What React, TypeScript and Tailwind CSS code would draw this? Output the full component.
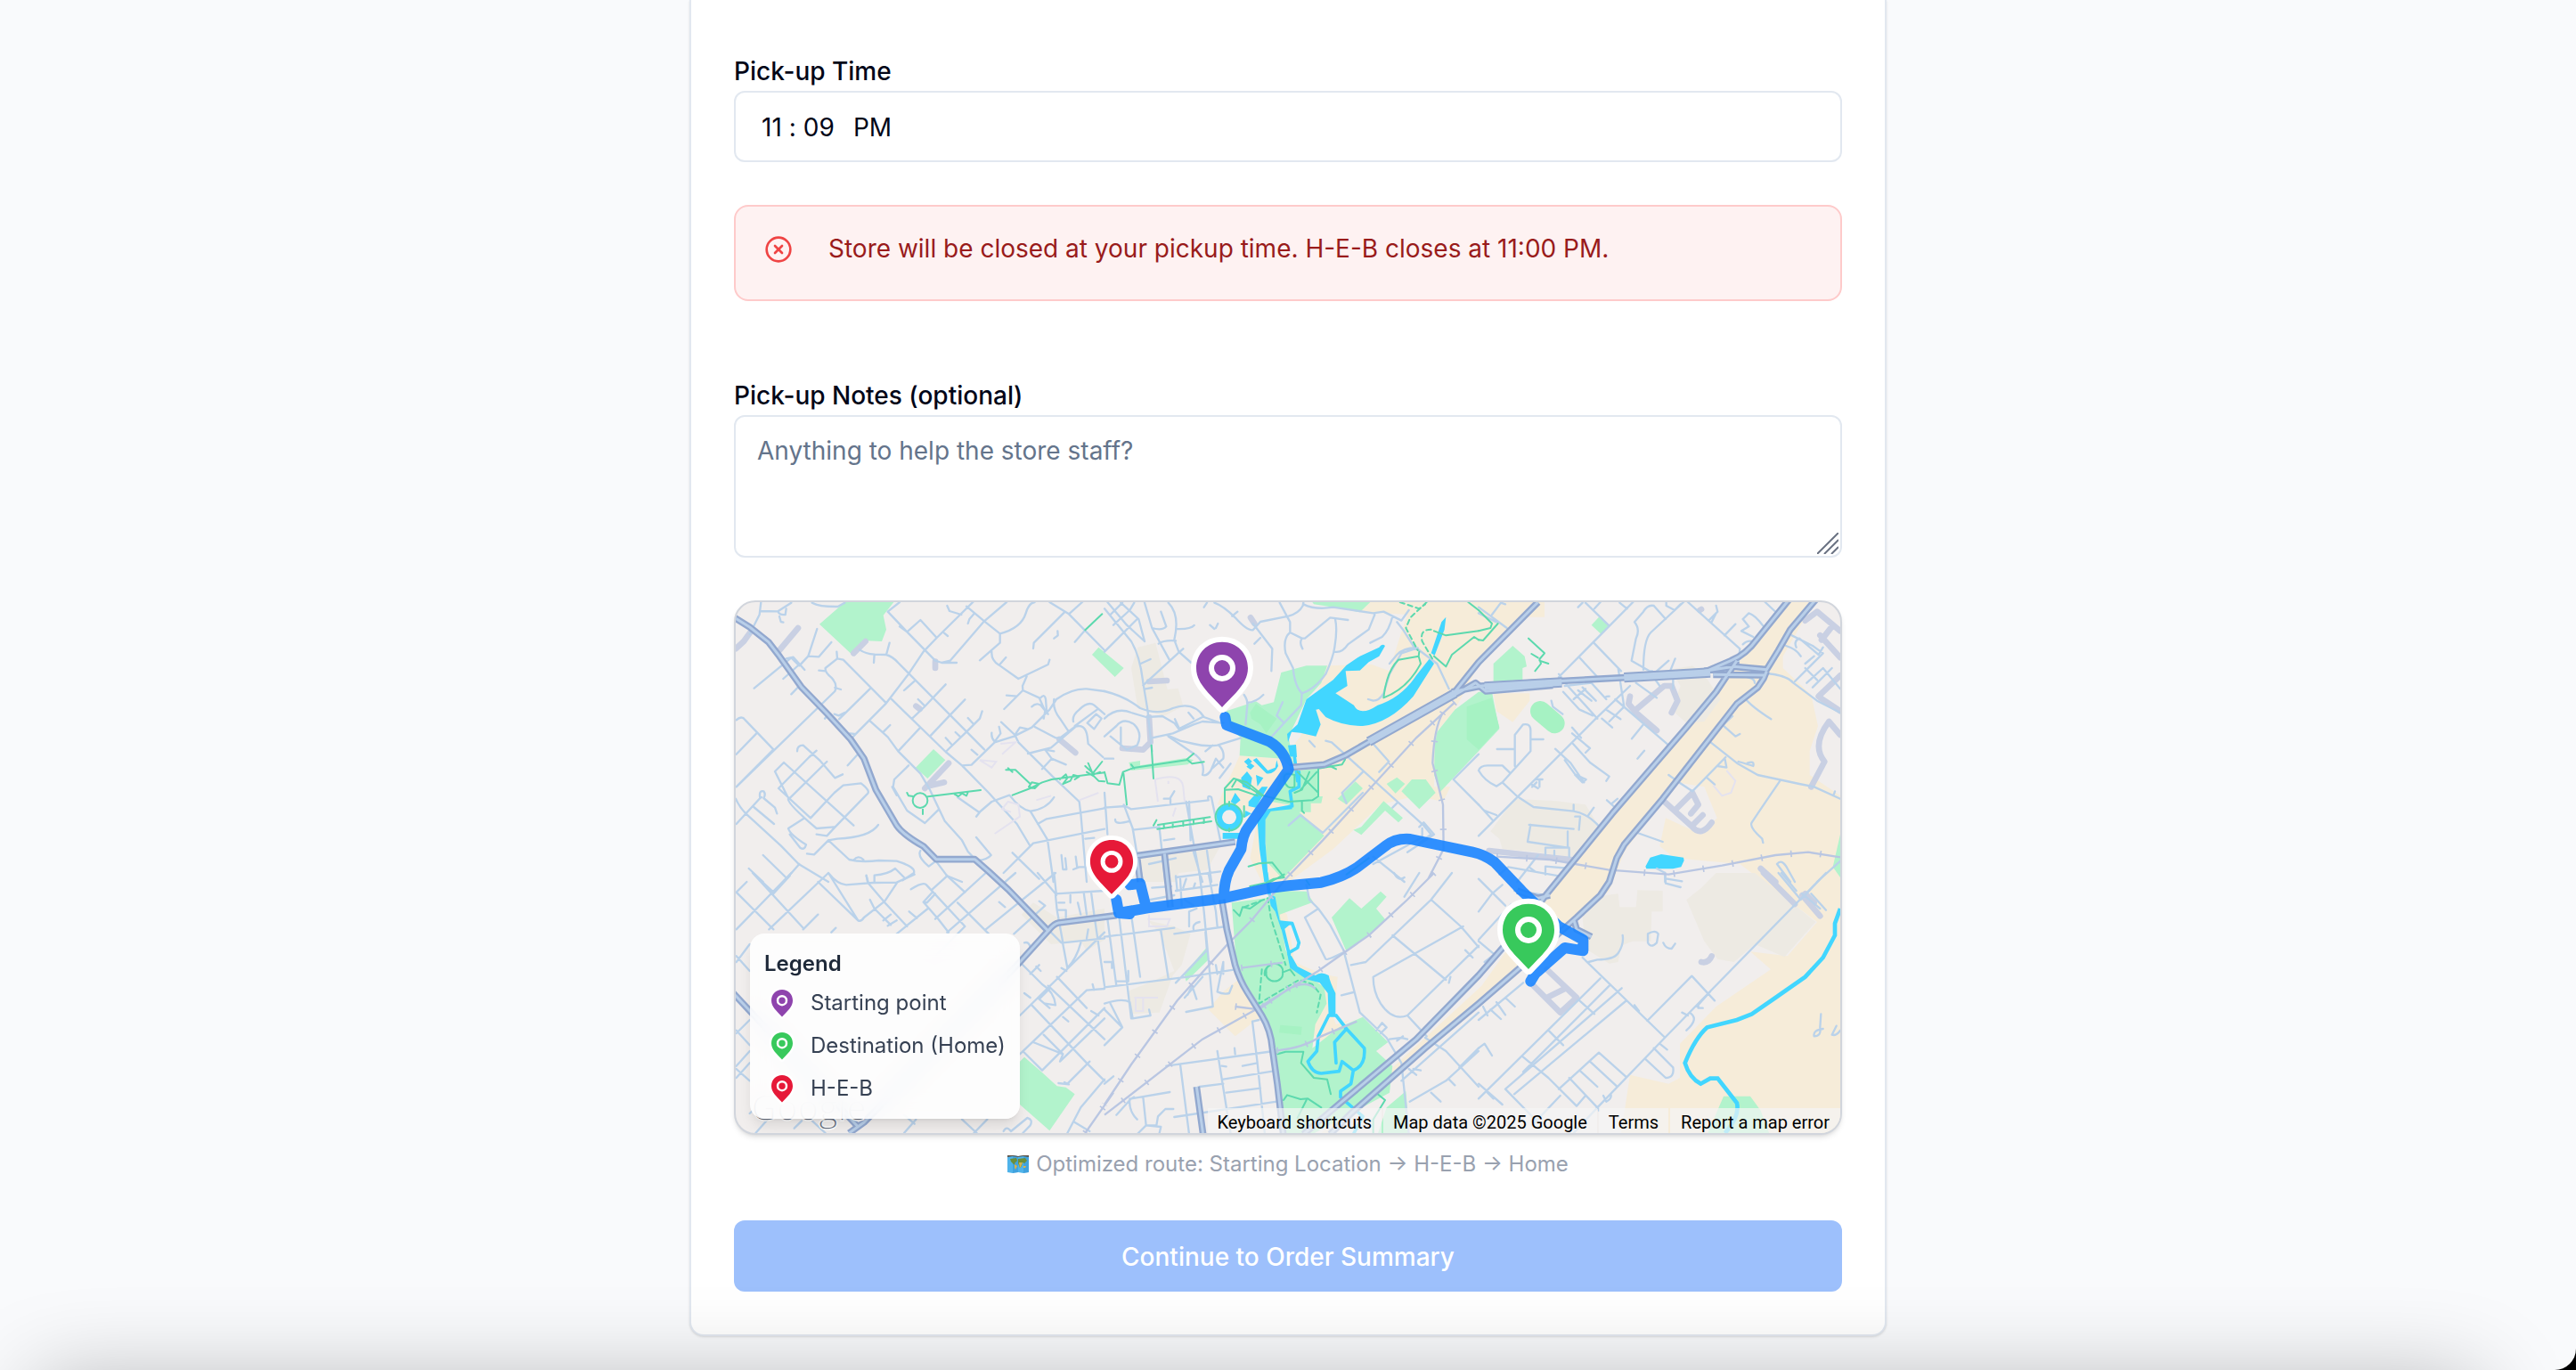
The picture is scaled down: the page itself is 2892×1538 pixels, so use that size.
import { useState } from "react";
import { CircleX } from "lucide-react";

// The map is drawn in six tiles that share one canvas. Every tile is 1260 units
// wide; the lower row starts 930 units down.
type Tile = { x: number; y: number; d: string };

const PATCHES: Tile[] = [
  {
    x: 1260,
    y: 0,
    d: "M112 170L172 155L212 312L248 308L265 368L200 402L112 375L90 240ZM110 880L390 840L345 920L250 930L240 960H110Z",
  },
  {
    x: 2520,
    y: 0,
    d: "M645 245L720 232L760 262L815 345L760 420L700 425L650 380L680 300ZM40 790L120 680L262 688L360 700L410 780L330 880L180 858L80 850L70 815Z",
  },
  { x: 0, y: 930, d: "M980 140L1020 100L1100 150L1260 120V225L1200 262L1180 230L1080 240Z" },
  {
    x: 1260,
    y: 930,
    d: "M145 160L235 180L290 205L260 310L230 345L185 470L90 475L75 400L160 365L235 330L185 200Z",
  },
  {
    x: 2520,
    y: 930,
    d: "M350 150L385 80L470 70L475 115H530L535 58L620 60V130H583L580 230H518L480 245L470 300L440 305L360 255ZM700 90L750 50L800 0H930L1135 165L1030 283L930 240L860 300L805 290L760 230Z",
  },
];

const PARKS: Tile[] = [
  {
    x: 0,
    y: 0,
    d: "M300 92L385 18H550L515 62L525 110L510 150L460 148L410 195ZM624 575L684 513L724 550L664 612ZM1218 195L1240 170L1325 240L1295 270Z",
  },
  {
    x: 1260,
    y: 0,
    d: "M700 18H895L860 52L800 40L705 25ZM595 255L680 232H750L730 290L680 345L620 470L640 590L600 545L455 535L458 475L425 440L410 385L470 365L510 352L530 365L570 355ZM600 590L720 578V672H735L730 695H695V725H650L620 700L560 690ZM540 720L640 710L740 805L600 950L545 890ZM1112 500L1120 455L1180 380L1260 320H1305L1320 400L1330 445L1260 520L1130 658L1110 600ZM785 680L845 622L870 645L815 700ZM950 630L985 608L1012 630L980 662ZM1000 655L1035 615H1082L1115 660L1060 715ZM838 785L865 775L940 688L1005 745L990 760L945 720L865 802ZM82 558L120 552V568L275 543L300 550L280 565L90 585Z",
  },
  {
    x: 2520,
    y: 0,
    d: "M50 225L115 165L155 200L162 235L148 240V280L50 285ZM380 95L405 68L437 98L412 125ZM1218 800L1193 910L1218 945Z",
  },
  { x: 0, y: 930, d: "M975 635L990 620L1050 672L1100 718L1130 722L1160 745L1075 868L975 780Z" },
  {
    x: 1260,
    y: 930,
    d: "M428 100L545 85L580 60L680 62L703 98L590 140L610 260L650 325L740 385L748 440L710 510L700 590L790 520L870 485L955 570L915 600L970 650L960 740L700 880H603L580 650L540 480L445 320ZM765 150L825 85L865 120L930 62L950 80L915 120L948 160L815 265ZM268 340L345 250L352 290L275 365ZM950 790L1015 735L1027 880H920Z",
  },
  { x: 2520, y: 930, d: "M825 752H915L950 800L980 880H770Z" },
];

const STREETS: Tile[] = [
  {
    x: 0,
    y: 0,
    d: "M103 18L98 60L65 125M100 48L160 49L205 20M160 49Q165 62 185 60L188 40M165 66L170 84L178 86M275 20Q300 34 362 33L385 20M80 308L205 205L232 232L262 200L292 108M188 208L212 203L250 246M262 200L298 202L340 153M178 276L232 228M205 328L232 300M358 185L360 208L320 240Q318 255 340 272Q362 295 352 318L20 640M298 248L320 250M352 306L372 312M360 208L380 212L525 358M435 178Q455 192 485 194L525 195Q545 200 565 222L855 514M485 194L483 222M525 195L536 155M366 412L472 308M412 472L525 358L600 260L650 185L695 138L855 -20M542 344L725 522L780 568L870 660L965 765L1010 840M470 418L530 472L565 520L640 440M565 520L640 595L672 650L722 755L780 820L800 858L830 890M516 454L538 432M585 315L620 284M612 410L652 372L725 295M672 470L738 400L790 346M725 522L795 455L840 410L848 385M780 568L812 566L890 490L955 470L1015 440L1075 380L1098 345Q1150 308 1200 310L1260 318M632 345L655 368M725 475L745 497M758 456L775 472M800 408L820 430M812 515L832 532M570 100L595 118L640 78L695 138M530 50L570 18M530 50L595 118L690 215L712 222L762 222M712 222L740 215L855 82L930 18M720 122L732 132M730 30L738 48L778 60M800 90L805 75L820 58M795 32L855 82L908 124Q980 105 995 55Q1005 20 1025 18M908 124L908 155L840 214M880 185Q878 215 905 230L970 276L1070 228L1075 212M905 230L928 204M998 268L984 300L985 315L922 378M930 332L965 335M985 315L1040 340L1060 385L1055 410M1015 370Q1030 355 1045 365L1070 395M1045 340Q1058 325 1062 345L1065 385M1075 18L1140 58L1185 18M1140 58L1260 180M1125 52L1022 155L1020 174M1160 152L1195 112M1102 115L1103 130L1090 140M1090 345Q1085 380 1110 410L1140 455M1025 438L1095 475L1110 475L1160 438Q1195 425 1202 470L1205 495L1255 540M1002 528L1080 508L1160 440M912 422L958 465L970 490L1085 605L1175 690L1180 730L1200 960M955 470L975 440L1000 445M1050 580L1082 545L1060 515L1090 520M1082 545L1130 565M1155 420Q1150 400 1175 380Q1205 350 1225 365L1260 395M1202 425L1232 395L1250 410L1225 445ZM1160 435L1235 380M880 458Q878 475 890 488M890 488L910 460L905 438M20 530L90 458M20 415Q38 398 50 415L145 514L20 640M20 765L100 678Q95 650 112 655Q120 665 112 678L150 710L157 730M100 678L105 675M75 705L147 765M18 680Q30 708 52 730L170 838L230 900L330 960M150 588L180 558L415 770M162 645L270 745M195 680Q190 695 290 780L350 775M150 588L192 672M162 645L265 540L290 518M195 683L325 555M225 520Q225 500 245 500L300 550L352 610L378 598M270 745L350 660L380 635L440 628Q475 655 460 665L350 778L325 805L290 800M250 745L195 780Q200 800 255 835Q250 855 235 845L200 800M330 820L360 815Q470 810 498 768M330 820L282 868L258 865M330 820L400 885Q440 895 500 888L560 890Q625 910 618 930L580 955M415 887Q430 868 448 885M110 870L190 948L232 900M62 915L110 960M485 960V938Q530 935 555 915L585 945M458 938L462 960M600 568L552 615L548 640L595 720L655 762L702 716M545 640L560 668M640 855Q628 875 668 908L692 890M692 890L730 940L780 960M828 810L878 870Q865 885 835 888M765 675L838 726L880 690L940 668Q975 715 1010 722Q1065 715 1090 675M828 740L840 725M1010 722L1068 818L1088 960M1035 765L1065 748L1260 712M920 930L1020 830L1260 782M950 862L1040 950M1115 870L1120 918H1132L1128 880M1163 875L1168 912M1155 918L1175 910H1220M1195 815L1225 812M395 568L440 518M350 395L365 400L385 390M318 410L330 395M402 460L418 462",
  },
  {
    x: 1260,
    y: 0,
    d: "M0 40L90 150Q120 200 130 290L145 380L160 520M0 185L110 75M10 18L75 95L135 150M20 60L60 20M55 20L115 75L135 150M30 95L85 45L100 20M135 20L160 105L220 215M160 105Q195 115 208 100L190 50M215 20Q255 60 235 145L250 185L292 222M242 108Q290 110 302 96M182 158Q200 145 240 148M130 298L250 188L265 175M122 225L155 210M138 310L160 306M335 35L345 20M370 20Q400 30 440 70Q480 115 500 112L525 84L620 65Q655 55 668 30L670 18M430 65L448 50M500 90L565 175L562 250M505 158L525 138M355 95L370 108M375 105L382 90M590 20L625 85V120L665 140H675L760 70L820 78M665 140Q655 155 667 175M625 120Q600 140 610 190L635 240Q640 300 665 325M777 75Q785 110 775 170Q770 205 745 260Q710 310 665 325L662 365L605 425L555 480M600 355L580 400L605 425M775 185Q800 190 820 160L890 110L910 60M670 25Q710 45 770 35L905 55L940 50L1000 80L1025 45M895 155L935 135Q960 110 970 65M985 85L1005 110L1040 165L1120 225L1160 310M960 225L985 195Q1010 170 1055 172M1055 172L1000 190L960 260L940 325Q925 350 905 350L888 345M470 330Q485 350 480 375L475 430M480 357Q510 355 535 330M0 318Q70 335 120 375Q180 400 230 375Q300 350 335 405L390 425M0 410Q40 370 90 390L140 405L195 402L235 425L250 445L330 405M237 412L250 440M283 390L300 410M160 475L230 460L300 430L330 420L400 425M210 465L255 485L300 495Q340 505 380 500L460 475M215 470L310 535Q340 560 330 600Q345 605 358 585L375 545L400 575M340 520L365 500M388 610L425 562M385 500Q405 520 400 545L360 580M0 470L40 435Q65 405 100 430Q130 460 110 500L75 515L20 470M55 440V500M0 545H30M0 710L70 705L90 715L350 685Q345 665 360 675L390 820M65 700L95 780L110 870M95 785L185 775M36 750Q35 770 85 755M200 680H220L235 655M222 680V695M275 690L300 830L325 960M285 690L290 820M300 860L330 960M345 855L360 960M185 780L205 960M110 870L130 960M200 820L235 815M240 945L390 925M150 900L240 880M0 660L10 800M905 495L958 555L925 590M745 485L765 490L1075 770L1100 800M870 590L800 660L815 695M1060 775L1075 760L1110 800L1020 860M970 710L985 695M1070 780V810L905 900M905 875L1010 960M1260 530L1175 615L1260 700M660 735L735 795L870 660M620 770L660 735M690 485L708 505M1100 800L1060 830",
  },
  {
    x: 2520,
    y: 0,
    d: "M0 35L95 105M45 60L75 20L90 25M335 35L350 20M360 20L440 98M390 40L410 18M475 20L500 40M520 18L270 270M388 155L480 250M340 205L400 270M590 30Q570 25 555 50L525 85Q545 110 530 140L515 215L575 250H585M690 18L580 120Q555 145 555 245M590 30L630 75M632 30L660 45L680 25M632 30V20M705 18L880 175L875 220M800 30L805 50L775 80M785 85L800 55M828 130L865 92M965 18L1010 60M890 75L910 55Q930 60 960 100M890 75L910 100L885 115L925 135M890 160Q905 145 925 150M270 260L300 300L400 410M285 320L340 380L385 400M0 805L395 410L510 300M290 300L380 290L430 345M335 315L380 350M350 305L395 350M320 345L360 310M430 345Q420 335 440 335M470 240L490 370L440 420M415 410L450 440M430 380L478 412M460 345L640 500M610 300Q590 270 575 260M600 250L640 215M645 250L662 208M655 280V310M530 290L600 340M555 430L516 478M535 545L558 518M315 440L345 475M318 495L375 558L440 605L430 620M315 460L375 510L360 525M258 512L310 560L355 625M290 550L325 598L362 615L350 625L325 600M245 350L250 370L283 395M62 513H122M175 480H218M122 570V465L150 430Q175 425 175 450V520L80 625M0 585Q5 568 30 568H80L105 592M0 585Q20 620 60 638L80 625L130 672L185 708L320 722Q370 730 410 778M175 630L200 645M192 615L215 615M180 640L195 625M205 640V615M320 720V700M370 735L388 710M432 685L460 710M468 680L450 695M20 720L60 735M0 700L50 755M170 768L320 782M175 768L165 825L300 845V790M225 870V845H305V875M255 855V870M325 740H342L338 785M70 935L100 910L270 940M225 935V908L310 915M170 910L190 925M600 915L628 930V960M535 795L620 825M640 600L668 620L720 655L832 540M775 485L870 560L940 600L1080 630L1130 640L1218 680M1015 620Q960 700 920 760Q910 775 955 815L958 828M875 555Q910 565 925 570Q930 550 905 560M770 610L795 632M805 570L835 575L830 548M820 430L865 470L880 462M825 430L855 402M900 345Q920 370 985 412M970 258Q1040 265 1060 290L1140 350L1218 390M905 270Q930 275 930 290M1055 130L1125 165L1160 190L1065 285M1035 165Q1070 175 1085 200M1100 240L1140 280M1070 170Q1060 150 1080 140L1145 195L1160 170M1100 225L1130 200M1105 290L1160 240L1218 310M1125 305L1190 240M1195 670L1200 655M1140 960L1218 890M1005 900Q1020 880 1040 915L1065 960M1005 900L1050 960M0 55L60 85M130 960L200 870",
  },
  {
    x: 0,
    y: 930,
    d: "M20 190L205 0M20 65L145 190M75 0L245 185M145 70L200 10M75 0L145 65M20 65L55 30M130 190L330 0L430 160Q440 165 450 150L520 95L560 35M295 30L430 160M330 0Q360 38 390 40L480 33L560 32L620 5M458 10L465 35L520 100L595 180M295 140L245 190M355 185L340 200M470 90L485 120L540 175M515 160L540 140M530 178L560 160M602 130L628 152M560 205L665 120M608 55Q650 28 660 40L790 180M680 65L650 98L700 155L735 200M650 98L662 100L690 70M680 55L730 10M728 8L790 65M790 180L660 310M690 155L860 0M765 100L870 205M730 200L960 0M860 190L1095 0M905 98L925 115M1035 0L1095 70L1260 60M1040 95L1060 110M955 205L1060 110M1095 75L1100 125L1120 235M1100 125H1130V150M1145 75V100M1105 100H1125M1170 100L1180 140M1190 65L1200 140M1215 65L1225 140L1260 380M1120 235L1260 220M1090 0L1098 75M1205 190L1200 220M1180 235Q1165 290 1135 320L1120 240M990 235Q1005 230 1010 250M975 300L1050 375Q1090 400 1095 445L1060 440M1060 180L1115 235M975 480L1260 200M1010 340L1040 310M1045 330L1030 315M1115 320L1132 330M1070 380L1260 560M1100 350L1200 455M1015 445L1200 640L1260 700M975 610L1200 395L1260 390M1020 570L1120 610M1055 545L1120 610L1110 635L1260 490M985 600L1050 665L1260 455M1125 705L1135 710L1210 635M1105 708L1140 712M1220 375L1225 395M1215 465L1240 480M990 405L1010 420M1075 390L1040 425L1075 455M1120 485L1138 500M1135 876L1180 790L1260 695M1160 840L1210 870M20 300L65 240M20 280L65 330M20 540L65 495M20 530L65 580M20 650L65 600M20 690L65 640M20 660L65 700M85 876L130 825M65 810L85 790M215 860L240 835M270 830L320 876M585 815L620 845M585 876L625 830M780 830L830 876M820 876L865 830M920 870Q930 850 945 870L1000 825Q1020 830 1010 850L985 876",
  },
  {
    x: 1260,
    y: 930,
    d: "M155 90L235 75M160 50L225 45M240 60L380 40M255 20L260 110M240 10L245 60M265 50L275 20M300 50L305 35M320 0L335 130L365 450L275 468M350 0L375 130L380 180M0 215L235 185M235 205L410 180M10 155L40 380M50 155L90 490M92 155L120 350M190 195L215 355M0 385L280 350L440 325M285 180V130L310 120M270 90L300 110M330 110L375 105M300 190Q295 170 320 165M340 200L345 260L240 370M0 300H25V320M40 365H80V330M0 440Q60 420 85 435L95 490L155 480L150 460M20 440L60 520L0 580M0 460L60 520M280 410L295 380L310 425M270 420L330 350M375 310L380 340M400 300L380 400Q400 410 420 405L430 380M400 300V340M208 650L570 600M255 645L285 880M380 600L425 880M438 590L440 610M498 500L515 640L540 880M500 500L520 495M395 650L410 652M465 650L515 640M400 695L565 668M410 740L525 725M235 822L580 770M320 720L400 710M40 815L90 760L220 738M85 760Q80 800 110 830M90 760L100 755M130 755L140 850H175L180 820L205 795H232M110 880L140 850L190 855L185 876M0 710L30 685M680 40L690 90L720 120L760 175L805 260L860 470M720 120L675 150L745 290Q750 295 810 265M860 470L950 555L1000 640L1025 880M798 412L838 402M975 0Q990 30 1010 15M830 310L880 300L1100 90L1170 0M1100 90L1200 180L1260 250M970 210L1150 360M1208 180L905 350Q905 400 930 440Q970 500 1020 480L1260 245M1020 480L1085 550M915 530L935 505L950 520L930 540M960 560L1000 555L1020 560M985 565L1005 550M1080 555L1150 600L1260 720M1000 700L1260 470M1195 655L1260 590M1028 770L1150 700L1260 600M1040 660L1065 665M1025 660L1050 680M1100 740L1132 770M1160 695L1180 715M1160 370L1165 350M1215 260L1240 285M1060 0L1010 80",
  },
  {
    x: 2520,
    y: 930,
    d: "M0 20L90 110M45 70L80 40M0 225L110 105M0 230L60 280M0 130L45 70M20 300L45 280M120 60L225 75M350 285L625 552M370 300L400 292Q455 292 470 270Q490 240 485 210M568 498L718 347L795 430M1170 0L630 552L400 790L320 876M570 205Q595 190 605 205L600 235Q580 255 570 235ZM622 235Q630 255 650 255L662 238M628 0L630 35L680 48M635 20L685 28M525 445L540 465M780 400L735 450M740 440V455L755 455M685 470L705 480M710 470Q745 490 700 530M610 575L635 595M590 590L655 655Q660 690 630 690L560 625M235 530L285 580M340 430L390 475M410 355L0 760M440 380L150 670M482 388L90 728M495 432L120 745M150 620L235 690M235 690L330 785L360 750M270 728L405 605L495 685M340 665L400 720M375 635L465 718M305 690L400 790M90 728L200 840M30 740L50 760M0 710L80 780M0 495L150 370M90 420L122 450M60 435L90 478M40 460L75 492M15 450L30 480M0 590L20 575L45 615M275 750L180 850M430 770Q450 760 445 745M420 750L430 770M405 795V800M1010 0L1085 90L1170 0M1020 0L1070 60M1090 70L1150 120M1120 70L1170 125M1153 475L1150 520Q1155 550 1130 550Q1125 530 1160 525M1205 515L1190 545Q1205 550 1218 530",
  },
];

// Wide pale strokes around the service roads.
const HALOS: Tile[] = [
  { x: 0, y: 0, d: "M18 175L45 150L68 118M165 180L228 105M690 218V240M625 368L638 378M415 190L455 150M655 645L735 560M675 635L720 625M1108 480L1162 525" },
  { x: 1260, y: 0, d: "M492 70L505 90M150 285L210 282M150 405L155 490L130 515L60 510" },
  { x: 2520, y: 0, d: "M745 45L750 42M510 335L505 360L530 390L600 450M530 380L625 300L650 300L670 350L650 390M1100 80L1140 50L1218 115M1155 145L1190 100M1150 130L1218 205M1145 335L1218 265M1150 340L1218 385M1218 465L1180 420Q1120 500 1165 555L1120 640M620 685L720 775Q750 810 785 760M720 770L755 735M660 720L720 660L740 700L715 730M35 855L310 885M950 915L1000 960" },
  { x: 2520, y: 930, d: "M185 380L275 470L330 420L230 325M230 420L290 390M750 300Q775 305 785 280M960 0L1065 105M1090 75L1150 145M1100 70L1130 100" },
];

const TRAILS: Tile[] = [
  {
    x: 0,
    y: 0,
    d: "M595 660L600 670L615 672M614 686a25 25 0 1 0 50 0a25 25 0 1 0 -50 0M648 710V732M665 673L843 651M755 665L768 672L780 662L795 670L800 658M950 668L1010 645L1050 625L1082 615L1260 592M928 583H960L1010 630M935 577L950 590M1005 640L1015 625L1040 630L1025 645ZM1110 615L1130 598L1135 610L1120 630L1145 620L1155 600L1175 605L1160 615M1200 590L1225 605L1240 620L1260 622M1205 560L1220 595L1252 555M1195 570L1225 598L1245 590M1195 112L1252 58",
  },
  {
    x: 1260,
    y: 0,
    d: "M0 590L10 628L50 633L62 590L98 576L275 550L300 528M280 550L295 562L335 556M90 565L100 578M158 500L165 612M64 595L75 700M405 700V645L435 612L480 625L535 670L620 690L700 685L720 672V580M405 650L450 648L515 670M430 640L445 615L530 670M374 742a45 45 0 1 0 90 0a45 45 0 1 0 -90 0M420 690V705M420 780V790M470 740V705M180 768L355 742M178 782L360 756M165 770L175 752M200 768V780M230 762V776M265 758V772M300 752V766M335 748V762M605 605Q610 590 640 600V640Q615 650 605 620ZM650 590L720 660M660 650L715 590M640 660L665 650L690 590M720 578L800 565L810 548M760 570L780 580M665 690V720L672 728M485 908L520 898L565 895L605 945L570 950L550 960M1110 115L1150 130L1260 115M1110 200L1150 235L1170 195L1245 135L1260 145M990 212L1058 200L1060 185M1058 200L1065 225Q1020 310 940 340Q950 250 990 212M1225 18L1260 45M815 935L890 880",
  },
  { x: 2520, y: 0, d: "M0 45L45 90L40 105L0 115M0 145L15 147L65 90M168 140L222 190L205 210L210 225L190 250M178 192L200 205M205 215L235 225" },
  {
    x: 1260,
    y: 930,
    d: "M435 125L455 145L465 115L490 120L525 95M490 45L560 30L605 5M545 335a28 25 0 1 0 55 0a28 25 0 1 0 -55 0M600 335L625 325L640 345M540 345Q535 320 560 310M583 610L610 602H670L662 640L705 690L750 695L762 745M603 765L615 748L660 762L685 760L730 790M680 765L650 825M905 876V830L945 765L920 745M690 40L680 25",
  },
];

const TRAILS_DASHED: Tile[] = [
  { x: 1260, y: 0, d: "M1085 18L1030 70L1015 105L1055 180M1100 110Q1060 110 1070 150L1105 210M995 18L1060 40L1080 25" },
  { x: 1260, y: 930, d: "M470 115L550 85L560 150L610 310M530 325L520 440L655 360L700 375L728 410L715 470" },
];

const WATER: Tile[] = [
  {
    x: 1260,
    y: 0,
    d: "M945 165Q935 155 925 170L860 200L815 230L770 280L680 345L650 430L615 462L618 490L630 455L660 458L712 470L728 430L712 380L722 378L745 405Q800 435 870 435Q960 425 1040 335L1110 225L1095 208L1050 265Q1000 340 920 365Q860 405 840 365L778 325L818 300L812 250L860 248L890 220L925 200ZM1100 190L1135 85L1150 68L1145 110L1112 197ZM618 500L645 498L648 540L625 538ZM460 610L480 588L497 610L490 650L465 640ZM510 600L535 610L515 638ZM425 690L440 660L458 685L440 700ZM485 690L530 640L550 640L510 710L485 705ZM470 555L485 543L497 555L483 568ZM478 572L492 560L505 570L492 582ZM500 550L512 543L550 585L575 575L580 550L585 570Q570 600 545 595ZM398 795H455V815H398ZM515 755L550 715L630 700L632 715L560 722L542 750V830L552 960H538L522 850ZM475 720L495 730L470 745Z",
  },
  { x: 2520, y: 0, d: "M562 908L578 878L615 867L690 878L692 888L682 910L655 916H565Z" },
  { x: 1260, y: 930, d: "M552 70L575 80L582 120L590 160L635 165L605 190L595 190L575 130L560 110ZM615 270L630 280L650 315L710 345Q730 330 755 345Q760 370 778 405L778 485H755L752 405L725 370L680 358L625 320Z" },
];

const WATER_LINES: Tile[] = [
  { x: 1260, y: 0, d: "M640 540L650 620M655 590V640L625 655L632 705" },
  {
    x: 1260,
    y: 930,
    d: "M545 0L555 70M598 175L622 275M605 170H632L655 235L650 252L622 268M755 480L720 550L715 600L685 635Q700 675 730 675L790 668L800 635L838 665L830 710L795 735L795 755L870 820L840 876M780 480L815 525L775 570L780 640M815 525L875 590Q880 650 838 665",
  },
];

const RAILS =
  "M2440 355L2310 475L1995 820L1870 950L1755 1090L1670 1175L1505 1360L1350 1575L1260 1710M2400 390Q2370 440 2365 560L2400 700L2402 850L2350 950M2370 930L2280 1020L2150 1140L1980 1260L1770 1390L1590 1490L1260 1745M2760 1140M2580 875L2760 885L2960 920L3160 935L3340 905L3520 870L3630 860L3738 877M1700 1380L1780 1390L1880 1320Q1940 1290 1970 1320M1720 1250L1860 1232M1840 1528Q1930 1520 1990 1480L2110 1430M1195 1806L1290 1670";

const HIGHWAYS =
  "M10 68L65 102L128 152L165 200L240 305L330 398L405 480L450 545L490 650L560 770Q580 800 650 840L693 884H823L870 925L935 985L1070 1125M400 1806L450 1770L975 1230L1070 1125Q1090 1100 1105 1098L1300 1073M10 1335L430 1785M1370 872L1700 825M1462 865L1482 1045M1370 880L1380 960M1655 1020L1672 1120L1700 1240Q1715 1290 1740 1330L1790 1410Q1820 1460 1825 1520L1842 1640L1862 1810M1570 1650L1592 1810M1885 575L2000 565L2070 535L2165 480L2440 320L2520 220L2720 18M2440 330L2510 290L2545 318L2770 298M2430 320L2530 300L2770 285L3010 272L3270 258L3370 215Q3420 195 3460 140L3565 10M3280 250L3380 235L3490 245L3530 180L3570 110L3655 10M3310 262L3485 264M3490 250L3480 275L3460 305L3390 360L3140 680L3010 835L2985 880L2960 960L2930 1005L2850 1080L2670 1240L2520 1370L2340 1520L2090 1740L2020 1810M3390 215L3320 320L3220 440L2970 730L2840 890L2750 1000L2690 1080L2520 1275L2310 1490L2060 1700L1930 1810M2840 1085L2850 1120L2900 1145M2650 990L2720 1015L2760 1005";

const INTERCHANGES = "M2150 488L2440 325M2540 303L2800 288M3010 272L3300 255";

const ROUTE =
  "M1666 405L1671 432L1815 487Q1870 520 1880 582L1745 775Q1725 800 1720 850L1680 920Q1662 960 1662 1012M1300 1020L1308 1065L1405 1048L1660 1015L1820 980L1880 973L1990 962Q2060 945 2110 912L2205 840Q2240 812 2290 816L2500 860Q2540 868 2575 895L2665 990L2790 1110L2872 1155V1192L2810 1182L2710 1270L2695 1295M1345 970L1380 965L1400 1045M1308 1065L1345 1068";

function Tiles({ tiles, className, width }: { tiles: Tile[]; className: string; width?: number }) {
  return (
    <g className={className} strokeWidth={width} strokeLinecap="round" strokeLinejoin="round">
      {tiles.map((t) => (
        <path key={`${t.x}-${t.y}`} d={t.d} transform={`translate(${t.x} ${t.y})`} />
      ))}
    </g>
  );
}

function PinShape({ className, outline }: { className: string; outline: number }) {
  return (
    <g strokeLinejoin="round">
      <path
        className={`${className} stroke-white [paint-order:stroke]`}
        strokeWidth={outline}
        d="M0-88C-50-88-87-50-87 0C-87 52-42 86 0 132C42 86 87 52 87 0C87-50 50-88 0-88Z"
      />
      <circle r="36" className="fill-none stroke-white" strokeWidth="18" />
    </g>
  );
}

function LegendRow({ label, className }: { label: string; className: string }) {
  return (
    <li className="flex h-10 items-center gap-3">
      <svg viewBox="-50 -62 100 100" className="size-10 shrink-0" aria-hidden="true">
        <g transform="translate(0 -19) scale(0.345)">
          <PinShape className={className} outline={36} />
        </g>
      </svg>
      <span>{label}</span>
    </li>
  );
}

function RouteMap() {
  return (
    <div className="relative h-[600px] overflow-hidden rounded-3xl border-2 border-gray-300 bg-[#f1eeed] shadow-md">
      <svg
        viewBox="18 18 3720 1788"
        preserveAspectRatio="xMidYMid slice"
        className="block h-full w-full"
        role="img"
        aria-label="Route map"
      >
        <g className="fill-[#f6ecd9]">
          <path d="M2155 18H2742V68H2685L2600 150L2520 230L2440 380L2375 460L2370 640H2425L2400 690L2310 670L2190 700L2030 850L1880 960H1790L1750 880L1780 730L1640 700L1715 535L1860 545L1920 470L2010 232L2160 228L2220 250L2250 150L2280 60L2120 50ZM2570 325H2692V350L2635 422L2580 385Z" />
          <path d="M1840 1040L1875 1070L1900 1230L1990 1270L2045 1280L2040 1340L2020 1390L2040 1440L2085 1425L2000 1500L1960 1480L1900 1300ZM1610 1390L1660 1330L1710 1290L1790 1410L1700 1480Z" />
          <path d="M3565 18H3650L3545 200V240L3640 330L3663 435L3635 520V600L3738 670V1806H1990L2530 1310L2750 1000L3340 280L3460 150Z" />
        </g>
        <path
          className="fill-[#f1eeed]"
          d="M3140 680L3185 625L3280 640L3323 745L3270 800L3150 745L3130 840L3180 880L3400 900L3440 930L3660 1095L3560 1210L3435 1195L3504 1255L3320 1380L3198 1505V1620L3160 1640L3030 1610L3000 1806H2030L2340 1520L2960 990L3010 860Z"
        />
        <Tiles tiles={PATCHES} className="fill-[#edeae3]" />
        <Tiles tiles={PARKS} className="fill-[#b2f3cc]" />
        <path className="fill-[#a6f2c3]" d="M1750 390L1770 360L1840 410L1805 460L1785 430L1755 410ZM2480 370L2565 340L2590 440L2520 515L2480 480ZM1852 1442L1925 1448L1922 1475L1848 1468Z" />
        <path className="fill-none stroke-[#a6f2c3]" strokeWidth="68" strokeLinecap="round" d="M2728 385L2776 426" />
        <Tiles tiles={WATER} className="fill-[#42d6ff]" />
        <circle cx="1680" cy="742" r="34" className="fill-none stroke-[#42d6ff]" strokeWidth="20" />
        <Tiles tiles={WATER_LINES} className="fill-none stroke-[#42d6ff]" width={11} />
        <path
          className="fill-none stroke-[#42d6ff]"
          strokeWidth="14"
          d="M3738 1050L3720 1100V1140L3680 1215L3620 1280L3520 1350L3440 1405L3390 1425L3290 1450Q3250 1485 3215 1570Q3230 1620 3268 1640L3300 1622H3325L3390 1705Q3400 1750 3350 1806"
        />
        <Tiles tiles={HALOS} className="fill-none stroke-[#c9d0e3]" width={20} />
        <Tiles tiles={STREETS} className="fill-none stroke-[#bad2ea]" width={7} />
        <path
          className="fill-none stroke-[#e4e2ef]"
          strokeWidth="6"
          d="M910 495L960 490L915 530M840 550L895 555L880 575ZM890 798L975 740L970 700L935 690L915 715L945 725M1030 685L1080 670M1175 685L1240 660M1430 615Q1520 590 1525 640L1530 690M1430 615L1440 690M1475 620V630M1490 740L1500 710M1405 1085H1480L1470 1110H1410V1070M1360 1350H1440M1365 1350V1395H1390V1350M3355 585L3385 620L3370 660L3340 670L3310 635"
        />
        <Tiles tiles={TRAILS} className="fill-none stroke-[#5cd9ae]" width={6} />
        <g strokeDasharray="16 12">
          <Tiles tiles={TRAILS_DASHED} className="fill-none stroke-[#5cd9ae]" width={6} />
        </g>
        <path className="fill-none stroke-[#b9c6e2]" strokeWidth="7" d={RAILS} />
        <path className="fill-none stroke-[#b9c6e2]" strokeWidth="22" strokeDasharray="5 95" d={RAILS} />
        <g className="fill-none" strokeLinejoin="round">
          <path className="stroke-[#92a8cf]" strokeWidth="23" d={HIGHWAYS} />
          <path className="stroke-[#92a8cf]" strokeWidth="34" d={INTERCHANGES} />
          <path className="stroke-[#b9cfe9]" strokeWidth="22" d={INTERCHANGES} />
          <path className="stroke-[#b9cfe9]" strokeWidth="9" d={HIGHWAYS} />
        </g>
        <path
          className="fill-none stroke-[#1a84ff]/90"
          strokeWidth="36"
          strokeLinecap="round"
          strokeLinejoin="round"
          d={ROUTE}
        />
        <g transform="translate(1656 240)">
          <PinShape className="fill-[#8e44ad]" outline={36} />
        </g>
        <g transform="translate(1284 892) scale(0.83)">
          <PinShape className="fill-[#e61938]" outline={36} />
        </g>
        <g transform="translate(2688 1122)">
          <PinShape className="fill-[#38c95c]" outline={36} />
        </g>
        <text
          x="70"
          y="1764"
          className="fill-gray-500 stroke-white font-['Open_Sans',sans-serif] text-[118px]"
          strokeWidth="4"
        >
          Google
        </text>
      </svg>

      <div className="absolute bottom-4 left-4 rounded-2xl bg-white/85 px-4 pt-[18px] pb-[14px] text-2xl text-gray-700 shadow-lg backdrop-blur-md">
        <h3 className="mb-2 leading-8 font-semibold text-gray-800">Legend</h3>
        <ul className="flex flex-col gap-2">
          <LegendRow label="Starting point" className="fill-[#8e44ad]" />
          <LegendRow label="Destination (Home)" className="fill-[#38c95c]" />
          <LegendRow label="H-E-B" className="fill-[#e61938]" />
        </ul>
      </div>

      <div className="absolute right-0 bottom-0 flex h-7 gap-0.5 font-[Roboto,sans-serif] text-xl leading-8 whitespace-nowrap text-black">
        <button type="button" className="bg-[#f5f5f5]/70 px-[11px]">
          Keyboard shortcuts
        </button>
        <span className="bg-[#f5f5f5]/70 px-[11px]">Map data ©2025 Google</span>
        <a href="#terms" className="bg-[#f5f5f5]/70 px-[11px]">
          Terms
        </a>
        <a href="#report" className="bg-[#f5f5f5]/70 px-3">
          Report a map error
        </a>
      </div>
    </div>
  );
}

function WorldMapIcon() {
  return (
    <svg viewBox="0 0 24 20" className="h-5 w-6" aria-hidden="true">
      <path className="fill-[#4fb3ea]" d="M0 1L6 0L12 1L18 0L24 1V19L18 20L12 19L6 20L0 19Z" />
      <path className="fill-[#2f8fd0]" d="M6 0L12 1V19L6 20ZM18 0L24 1V19L18 20Z" opacity="0.45" />
      <path className="fill-[#6c8f3a]" d="M3 4L10 3L11 6L8 9L9 11L7 10L4 7ZM12 4L20 3L22 6L19 9L17 8L16 12L14 14L12 9Z" />
      <path className="fill-[#d9b44a]" d="M8 10L11 12L9 16L8 14ZM13 8L17 8L15 13L14 14ZM18 12L21 12L20 14L18 14Z" />
      <path className="fill-[#5b5145]" d="M0 0L6 0L12 1L18 0L24 0V2L18 1L12 2L6 1L0 2Z" />
    </svg>
  );
}

export default function App() {
  const [time, setTime] = useState("23:09");
  const [notes, setNotes] = useState("");

  return (
    <div className="bg-black font-[Inter,sans-serif] text-[28px] text-slate-950">
      <main className="relative min-h-screen overflow-hidden rounded-br-3xl bg-[#f9fafc]">
        <form className="mx-auto flex max-w-[1344px] flex-col gap-12 rounded-b-2xl border-2 border-t-0 border-slate-200 bg-white px-12 pt-[66px] pb-12 shadow-sm">
          <div className="flex flex-col gap-2">
            <label htmlFor="pickup-time" className="leading-7 font-medium">
              Pick-up Time
            </label>
            <input
              id="pickup-time"
              type="time"
              value={time}
              onChange={(e) => setTime(e.target.value)}
              className="h-20 w-full rounded-xl border-2 border-slate-200 bg-white px-7 pt-0.5 [&::-webkit-calendar-picker-indicator]:hidden [&::-webkit-datetime-edit-text]:px-[7px]"
            />
          </div>

          <div
            role="alert"
            className="flex h-27 items-start gap-10 rounded-2xl border-2 border-[#fecaca] bg-[#fef2f2] px-8 pt-8 text-[#991b1b]"
          >
            <CircleX className="size-8 shrink-0 text-[#ef4444]" />
            <p className="leading-[30px]">Store will be closed at your pickup time. H-E-B closes at 11:00 PM.</p>
          </div>

          <div className="mt-11 flex flex-col gap-2">
            <label htmlFor="pickup-notes" className="leading-7 font-medium">
              Pick-up Notes (optional)
            </label>
            <div className="relative">
              <textarea
                id="pickup-notes"
                value={notes}
                onChange={(e) => setNotes(e.target.value)}
                placeholder="Anything to help the store staff?"
                className="block h-40 w-full resize-none rounded-xl border-2 border-slate-200 bg-white px-6 py-[18px] leading-10 placeholder:text-[#64748b]"
              />
              <svg viewBox="0 0 24 24" className="pointer-events-none absolute right-1 bottom-1 size-6" aria-hidden="true">
                <path className="fill-none stroke-gray-500" strokeWidth="2" d="M0 24L24 0M8 24L24 8M16 24L24 16" />
              </svg>
            </div>
          </div>

          <div className="flex flex-col gap-4">
            <RouteMap />
            <p className="flex h-8 items-center justify-center gap-2 pt-0.5 text-2xl text-gray-400">
              <WorldMapIcon />
              Optimized route: Starting Location → H-E-B → Home
            </p>
          </div>

          <button type="submit" disabled className="h-20 rounded-xl bg-[#9dc0fc] pt-0.5 font-medium text-white">
            Continue to Order Summary
          </button>
        </form>

        {/* Soft shade along the bottom edge of the window */}
        <div className="pointer-events-none absolute inset-x-0 -bottom-43 mr-27 ml-10 h-40 shadow-[0_0_100px_rgba(0,0,0,0.28)]" />
      </main>
    </div>
  );
}
